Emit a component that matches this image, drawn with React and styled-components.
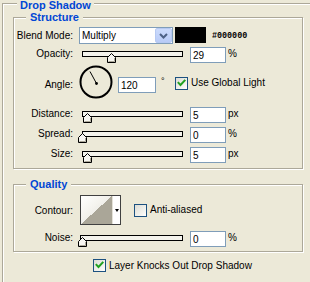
import React from 'react';
import styled, { createGlobalStyle } from 'styled-components';

const Global = createGlobalStyle`
  html, body { margin: 0; padding: 0; background: #ECE9D8; overflow: hidden; }
  body { font-family: "Liberation Sans", Arial, sans-serif; font-size: 10px; color: #000; }
`;

const Page = styled.div`
  width: 310px;
  height: 282px;
  overflow: hidden;
  box-sizing: border-box;
  padding: 3px 0 0 2px;
`;

const OuterGroup = styled.div`
  position: relative;
  width: 330px;
  height: 300px;
  box-sizing: border-box;
  border: 1px solid #ACA899;
  box-shadow: inset 1px 1px 0 #fff;
  padding: 13px 0 0 10px;
`;

const InnerGroup = styled.div`
  position: relative;
  width: 290px;
  box-sizing: border-box;
  border: 1px solid #ACA899;
  box-shadow: inset 1px 1px 0 #fff, 1px 1px 0 #fff;
  padding: ${p => p.$pad};
  margin-top: ${p => p.$mt || 0}px;
`;

const Legend = styled.div`
  position: absolute;
  top: ${p => p.$top}px;
  left: ${p => p.$left}px;
  padding: 0 ${p => p.$px}px;
  background: #ECE9D8;
  color: #0046D5;
  font-weight: bold;
  font-size: 11px;
  line-height: 12px;
  white-space: nowrap;
`;

const Row = styled.div`
  display: flex;
  align-items: ${p => p.$align || 'center'};
  height: ${p => p.$h}px;
  margin-top: ${p => p.$mt || 0}px;
`;

const Label = styled.div`
  width: 59px;
  flex-shrink: 0;
  text-align: right;
  white-space: nowrap;
  line-height: ${p => p.$lh || 13}px;
  align-self: ${p => p.$self || 'auto'};
  margin-top: ${p => p.$mt || 0}px;
`;

const Select = styled.div`
  display: flex;
  align-items: center;
  width: 94px;
  height: 17px;
  margin-left: 6px;
  box-sizing: border-box;
  border: 1px solid #7F9DB9;
  background: #fff;
  padding-left: 2px;
`;

const SelectText = styled.span`
  flex: 1;
  line-height: 15px;
`;

const DropButton = styled.span`
  display: flex;
  align-items: center;
  justify-content: center;
  width: 17px;
  height: 15px;
  box-sizing: border-box;
  border: 1px solid #B6C9F2;
  border-radius: 2px;
  background: linear-gradient(180deg, #CCDBFC 0%, #B8CBF7 100%);
`;

const Swatch = styled.div`
  width: 31px;
  height: 16px;
  margin-left: 2px;
  align-self: flex-start;
  background: #000;
`;

const HexText = styled.span`
  margin-left: 6px;
  font-family: "Liberation Mono", monospace;
  font-weight: bold;
  font-size: 8.4px;
  line-height: 12px;
  margin-top: 1px;
`;

const Slider = styled.div`
  position: relative;
  width: ${p => p.$w}px;
  height: 16px;
  margin-left: ${p => p.$ml}px;
  flex-shrink: 0;
`;

const Rail = styled.div`
  position: absolute;
  left: 0;
  right: 0;
  top: 4px;
  height: 6px;
  box-sizing: border-box;
  border: 1px solid #000;
  background: #F4F3EC;
`;

const Thumb = styled.svg`
  position: absolute;
  top: 6px;
  width: 9px;
  height: 10px;
`;

const NumInput = styled.input`
  width: ${p => p.$w}px;
  height: 16px;
  margin: 0 0 0 ${p => p.$ml}px;
  margin-top: ${p => p.$mt || 0}px;
  align-self: ${p => p.$self || 'auto'};
  box-sizing: border-box;
  border: 1px solid #7F9DB9;
  background: #fff;
  padding: 0 0 0 2px;
  font-family: "Liberation Sans", Arial, sans-serif;
  font-size: 10px;
  line-height: 14px;
  color: #000;
  outline: none;
  flex-shrink: 0;
`;

const Unit = styled.span`
  margin-left: 2px;
  align-self: flex-start;
  line-height: 13px;
`;

const Dial = styled.svg`
  width: 35px;
  height: 34px;
  margin-left: 6px;
  flex-shrink: 0;
`;

const Degree = styled.span`
  width: 8px;
  margin-left: 5px;
  margin-top: 11px;
  line-height: 10px;
  font-size: 9px;
`;

const CheckBox = styled.span`
  display: inline-flex;
  align-items: center;
  justify-content: center;
  width: 13px;
  height: 13px;
  flex-shrink: 0;
  box-sizing: border-box;
  border: 1px solid #1C5180;
  background: linear-gradient(135deg, #DCDCD5 0%, #F4F4F0 70%, #FFFFFF 100%);
  margin-left: ${p => p.$ml || 0}px;
  margin-top: ${p => p.$mt || 0}px;
`;

const CheckLabel = styled.span`
  margin-left: 3px;
  white-space: nowrap;
  line-height: 14px;
  margin-top: ${p => p.$mt || 0}px;
`;

const Contour = styled.div`
  display: flex;
  width: 41px;
  height: 30px;
  margin-left: 7px;
  box-sizing: border-box;
  border: 1px solid #404040;
  background: #fff;
`;

const ContourPreview = styled.div`
  width: 31px;
  height: 100%;
  background: linear-gradient(to bottom right, #FFFFFF 0%, #F4F3EE 40%, #F0EFEA 50%, #AAA698 50%, #AAA698 100%);
`;

const ContourArrow = styled.div`
  display: flex;
  align-items: center;
  justify-content: center;
  flex: 1;
  border-left: 1px solid #E4E2D8;
  &::after {
    content: '';
    border-left: 2.5px solid transparent;
    border-right: 2.5px solid transparent;
    border-top: 3px solid #000;
  }
`;

const KnockRow = styled.div`
  display: flex;
  align-items: center;
  margin: 7px 0 0 80px;
  height: 13px;
`;

const Check = ({ checked, ml, mt }) => (
  <CheckBox $ml={ml} $mt={mt}>
    {checked && (
      <svg width="11" height="11" viewBox="0 0 11 11">
        <path d="M2.5 4.8 L4.5 7 L8.6 2.6" fill="none" stroke="#21A121" strokeWidth="2" strokeLinecap="square" />
      </svg>
    )}
  </CheckBox>
);

const SliderControl = ({ thumb, w = 101, ml = 9 }) => (
  <Slider $w={w} $ml={ml}>
    <Rail />
    <Thumb viewBox="0 0 9 10" style={{ left: thumb }}>
      <path d="M0.5 9.5 V4.5 L4.5 0.5 L8.5 4.5 V9.5 Z" fill="#F7F6F1" stroke="#000" strokeWidth="1" />
      <path d="M7.5 5 V8.5 H1.5" fill="none" stroke="#ACA899" strokeWidth="1" />
    </Thumb>
  </Slider>
);

const sliderRows = [
  { label: 'Distance:', value: '5', unit: 'px', thumb: 1, mt: 8 },
  { label: 'Spread:', value: '0', unit: '%', thumb: -4, mt: 4 },
  { label: 'Size:', value: '5', unit: 'px', thumb: 1, mt: 4 },
];

export default function App() {
  return (
    <>
      <Global />
      <Page>
        <OuterGroup>
          <Legend $top={-5} $left={14} $px={3}>Drop Shadow</Legend>

          <InnerGroup $pad="9px 0 5px 0">
            <Legend $top={-7} $left={12} $px={4}>Structure</Legend>

            <Row $h={17}>
              <Label $lh={17}>Blend Mode:</Label>
              <Select>
                <SelectText>Multiply</SelectText>
                <DropButton>
                  <svg width="9" height="6" viewBox="0 0 9 6">
                    <polyline points="1,1 4.5,4.5 8,1" fill="none" stroke="#4D6185" strokeWidth="2" />
                  </svg>
                </DropButton>
              </Select>
              <Swatch />
              <HexText>#000000</HexText>
            </Row>

            <Row $h={16} $mt={3} $align="flex-start">
              <Label>Opacity:</Label>
              <SliderControl thumb={25} />
              <NumInput $w={36} $ml={7} readOnly value="29" />
              <Unit>%</Unit>
            </Row>

            <Row $h={34} $mt={2} $align="flex-start">
              <Label $lh={16} $mt={12}>Angle:</Label>
              <Dial viewBox="0 0 35 34">
                <circle cx="17" cy="17" r="15.5" fill="none" stroke="#000" strokeWidth="2" />
                <line x1="17.5" y1="18.5" x2="11" y2="6.5" stroke="#000" strokeWidth="1" />
                <circle cx="17.5" cy="18.5" r="1.4" fill="#000" />
              </Dial>
              <NumInput $w={38} $ml={4} $mt={12} readOnly value="120" />
              <Degree>°</Degree>
              <Check checked ml={6} mt={12} />
              <CheckLabel $mt={11}>Use Global Light</CheckLabel>
            </Row>

            {sliderRows.map(r => (
              <Row key={r.label} $h={16} $mt={r.mt} $align="flex-start">
                <Label>{r.label}</Label>
                <SliderControl thumb={r.thumb} />
                <NumInput $w={36} $ml={7} readOnly value={r.value} />
                <Unit>{r.unit}</Unit>
              </Row>
            ))}
          </InnerGroup>

          <InnerGroup $pad="10px 0 4px 0" $mt={15}>
            <Legend $top={-7} $left={12} $px={4}>Quality</Legend>

            <Row $h={30}>
              <Label>Contour:</Label>
              <Contour>
                <ContourPreview />
                <ContourArrow />
              </Contour>
              <Check ml={13} />
              <CheckLabel>Anti-aliased</CheckLabel>
            </Row>

            <Row $h={16} $mt={6} $align="flex-start">
              <Label>Noise:</Label>
              <SliderControl thumb={-2} w={103} ml={7} />
              <NumInput $w={36} $ml={7} readOnly value="0" />
              <Unit>%</Unit>
            </Row>
          </InnerGroup>

          <KnockRow>
            <Check checked />
            <CheckLabel>Layer Knocks Out Drop Shadow</CheckLabel>
          </KnockRow>
        </OuterGroup>
      </Page>
    </>
  );
}
